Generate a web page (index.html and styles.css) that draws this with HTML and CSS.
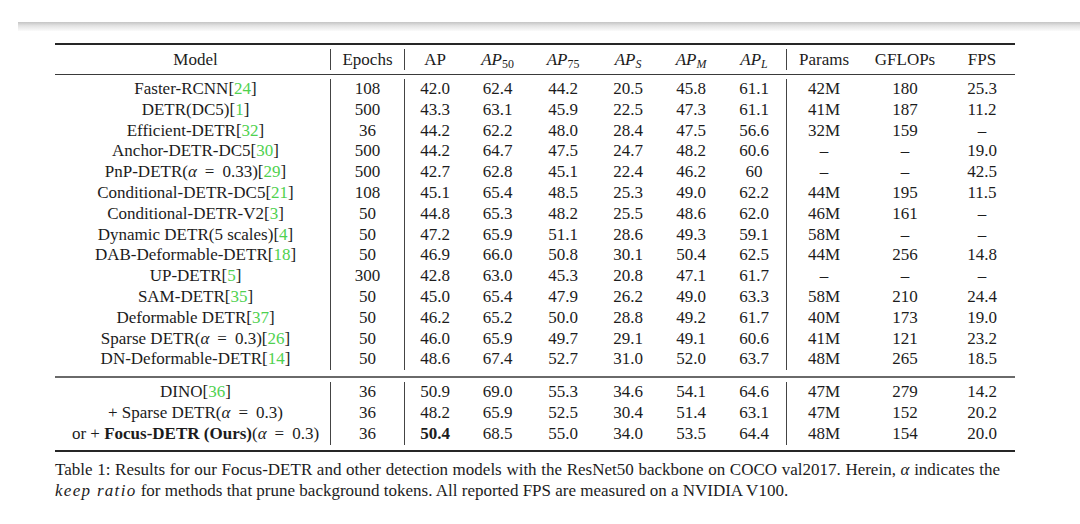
FILE: index.html
```html
<!DOCTYPE html>
<html>
<head>
<meta charset="utf-8">
<link rel="stylesheet" href="styles.css">
</head>
<body>
<div class="band"></div>
<div class="page">
<table class="results">
<colgroup>
<col class="c-model"><col class="c-ep"><col class="c-ap"><col class="c-ap50"><col class="c-ap75"><col class="c-aps"><col class="c-apm"><col class="c-apl"><col class="c-par"><col class="c-gf"><col class="c-fps">
</colgroup>
<tbody>
<tr class="rule"><td colspan="11" class="r-top"><div class="line thick"></div></td></tr>
<tr class="head">
<td class="model vl">Model</td><td class="vl">Epochs</td><td>AP</td>
<td><i>AP</i><sub>50</sub></td><td><i>AP</i><sub>75</sub></td><td><i>AP</i><sub><i>S</i></sub></td><td><i>AP</i><sub><i>M</i></sub></td><td class="vl"><i>AP</i><sub><i>L</i></sub></td>
<td>Params</td><td>GFLOPs</td><td>FPS</td>
</tr>
<tr class="rule"><td colspan="11" class="r-mid"><div class="line thin"></div></td></tr>

<tr><td class="model vl">Faster-RCNN[<span class="cite">24</span>]</td><td class="vl">108</td><td>42.0</td><td>62.4</td><td>44.2</td><td>20.5</td><td>45.8</td><td class="vl">61.1</td><td>42M</td><td>180</td><td>25.3</td></tr>
<tr><td class="model vl">DETR(DC5)[<span class="cite">1</span>]</td><td class="vl">500</td><td>43.3</td><td>63.1</td><td>45.9</td><td>22.5</td><td>47.3</td><td class="vl">61.1</td><td>41M</td><td>187</td><td>11.2</td></tr>
<tr><td class="model vl">Efficient-DETR[<span class="cite">32</span>]</td><td class="vl">36</td><td>44.2</td><td>62.2</td><td>48.0</td><td>28.4</td><td>47.5</td><td class="vl">56.6</td><td>32M</td><td>159</td><td>–</td></tr>
<tr><td class="model vl">Anchor-DETR-DC5[<span class="cite">30</span>]</td><td class="vl">500</td><td>44.2</td><td>64.7</td><td>47.5</td><td>24.7</td><td>48.2</td><td class="vl">60.6</td><td>–</td><td>–</td><td>19.0</td></tr>
<tr><td class="model vl">PnP-DETR(<i>α</i><span class="eq">=</span>0.33)[<span class="cite">29</span>]</td><td class="vl">500</td><td>42.7</td><td>62.8</td><td>45.1</td><td>22.4</td><td>46.2</td><td class="vl">60</td><td>–</td><td>–</td><td>42.5</td></tr>
<tr><td class="model vl">Conditional-DETR-DC5[<span class="cite">21</span>]</td><td class="vl">108</td><td>45.1</td><td>65.4</td><td>48.5</td><td>25.3</td><td>49.0</td><td class="vl">62.2</td><td>44M</td><td>195</td><td>11.5</td></tr>
<tr><td class="model vl">Conditional-DETR-V2[<span class="cite">3</span>]</td><td class="vl">50</td><td>44.8</td><td>65.3</td><td>48.2</td><td>25.5</td><td>48.6</td><td class="vl">62.0</td><td>46M</td><td>161</td><td>–</td></tr>
<tr><td class="model vl">Dynamic DETR(5 scales)[<span class="cite">4</span>]</td><td class="vl">50</td><td>47.2</td><td>65.9</td><td>51.1</td><td>28.6</td><td>49.3</td><td class="vl">59.1</td><td>58M</td><td>–</td><td>–</td></tr>
<tr><td class="model vl">DAB-Deformable-DETR[<span class="cite">18</span>]</td><td class="vl">50</td><td>46.9</td><td>66.0</td><td>50.8</td><td>30.1</td><td>50.4</td><td class="vl">62.5</td><td>44M</td><td>256</td><td>14.8</td></tr>
<tr><td class="model vl">UP-DETR[<span class="cite">5</span>]</td><td class="vl">300</td><td>42.8</td><td>63.0</td><td>45.3</td><td>20.8</td><td>47.1</td><td class="vl">61.7</td><td>–</td><td>–</td><td>–</td></tr>
<tr><td class="model vl">SAM-DETR[<span class="cite">35</span>]</td><td class="vl">50</td><td>45.0</td><td>65.4</td><td>47.9</td><td>26.2</td><td>49.0</td><td class="vl">63.3</td><td>58M</td><td>210</td><td>24.4</td></tr>
<tr><td class="model vl">Deformable DETR[<span class="cite">37</span>]</td><td class="vl">50</td><td>46.2</td><td>65.2</td><td>50.0</td><td>28.8</td><td>49.2</td><td class="vl">61.7</td><td>40M</td><td>173</td><td>19.0</td></tr>
<tr><td class="model vl">Sparse DETR(<i>α</i><span class="eq">=</span>0.3)[<span class="cite">26</span>]</td><td class="vl">50</td><td>46.0</td><td>65.9</td><td>49.7</td><td>29.1</td><td>49.1</td><td class="vl">60.6</td><td>41M</td><td>121</td><td>23.2</td></tr>
<tr><td class="model vl">DN-Deformable-DETR[<span class="cite">14</span>]</td><td class="vl">50</td><td>48.6</td><td>67.4</td><td>52.7</td><td>31.0</td><td>52.0</td><td class="vl">63.7</td><td>48M</td><td>265</td><td>18.5</td></tr>

<tr class="rule"><td colspan="11" class="r-sep"><div class="line sep"></div></td></tr>

<tr><td class="model vl">DINO[<span class="cite">36</span>]</td><td class="vl">36</td><td>50.9</td><td>69.0</td><td>55.3</td><td>34.6</td><td>54.1</td><td class="vl">64.6</td><td>47M</td><td>279</td><td>14.2</td></tr>
<tr><td class="model vl">+ Sparse DETR(<i>α</i><span class="eq">=</span>0.3)</td><td class="vl">36</td><td>48.2</td><td>65.9</td><td>52.5</td><td>30.4</td><td>51.4</td><td class="vl">63.1</td><td>47M</td><td>152</td><td>20.2</td></tr>
<tr><td class="model vl">or + <b>Focus-DETR (Ours)</b>(<i>α</i><span class="eq">=</span>0.3)</td><td class="vl">36</td><td><b>50.4</b></td><td>68.5</td><td>55.0</td><td>34.0</td><td>53.5</td><td class="vl">64.4</td><td>48M</td><td>154</td><td>20.0</td></tr>

<tr class="rule"><td colspan="11" class="r-bot"><div class="line thick"></div></td></tr>
</tbody>
</table>
<p class="caption">Table 1: Results for our Focus-DETR and other detection models with the ResNet50 backbone on COCO val2017. Herein, <i>α</i> indicates the <i class="kr">keep ratio</i> for methods that prune background tokens. All reported FPS are measured on a NVIDIA V100.</p>
</div>
</body>
</html>
```

FILE: styles.css
```css
html, body {
  margin: 0;
  padding: 0;
  background: #ffffff;
}
body {
  font-family: "Liberation Serif", "Times New Roman", serif;
  color: #1c1c1c;
  width: 1080px;
  height: 524px;
  overflow: hidden;
}
.band {
  margin: 22px 0 0 18px;
  height: 9px;
  background: linear-gradient(to bottom, #c4c4c4 0%, #e2e2e2 40%, #fbfbfb 100%);
}
.page {
  margin: 12px 0 0 55px;
  width: 960px;
}
.results {
  border-collapse: separate;
  border-spacing: 0;
  table-layout: fixed;
  width: 960px;
  font-size: 17px;
}
.c-model { width: 276px; }
.c-ep { width: 74px; }
.c-ap { width: 60px; }
.c-ap50 { width: 65px; }
.c-ap75 { width: 66px; }
.c-aps { width: 64px; }
.c-apm { width: 62px; }
.c-apl { width: 65px; }
.c-par { width: 74px; }
.c-gf { width: 88px; }
.c-fps { width: 66px; }
.results td {
  padding: 0;
  text-align: center;
  white-space: nowrap;
  height: 20.8px;
  line-height: 20.8px;
}
.results tr.head td {
  height: 21px;
  line-height: 21px;
}
.results td.model {
  padding-left: 6px;
}
.results td.vl {
  border-right: 1px solid #444;
}
.results tr.rule td {
  height: auto;
  line-height: 0;
}
.r-top { padding: 0 0 4px 0 !important; }
.r-mid { padding: 4px 0 4px 0 !important; }
.r-sep { padding: 6px 0 4px 0 !important; }
.r-bot { padding: 5px 0 0 0 !important; }
.line { width: 100%; }
.line.thick { height: 2px; background: #262626; }
.line.thin { height: 1px; background: #3a3a3a; }
.line.sep { height: 2px; background: #6a6a6a; }
.eq {
  margin: 0 8px;
}
sub {
  font-size: 0.7em;
  vertical-align: -0.22em;
  line-height: 0;
}
.cite { color: #4fd14f; }
b { font-weight: bold; }
.caption {
  margin: 7px 0 0 0;
  width: 945px;
  font-size: 17px;
  line-height: 21px;
  text-align: justify;
}
.kr { letter-spacing: 1.3px; }
```
